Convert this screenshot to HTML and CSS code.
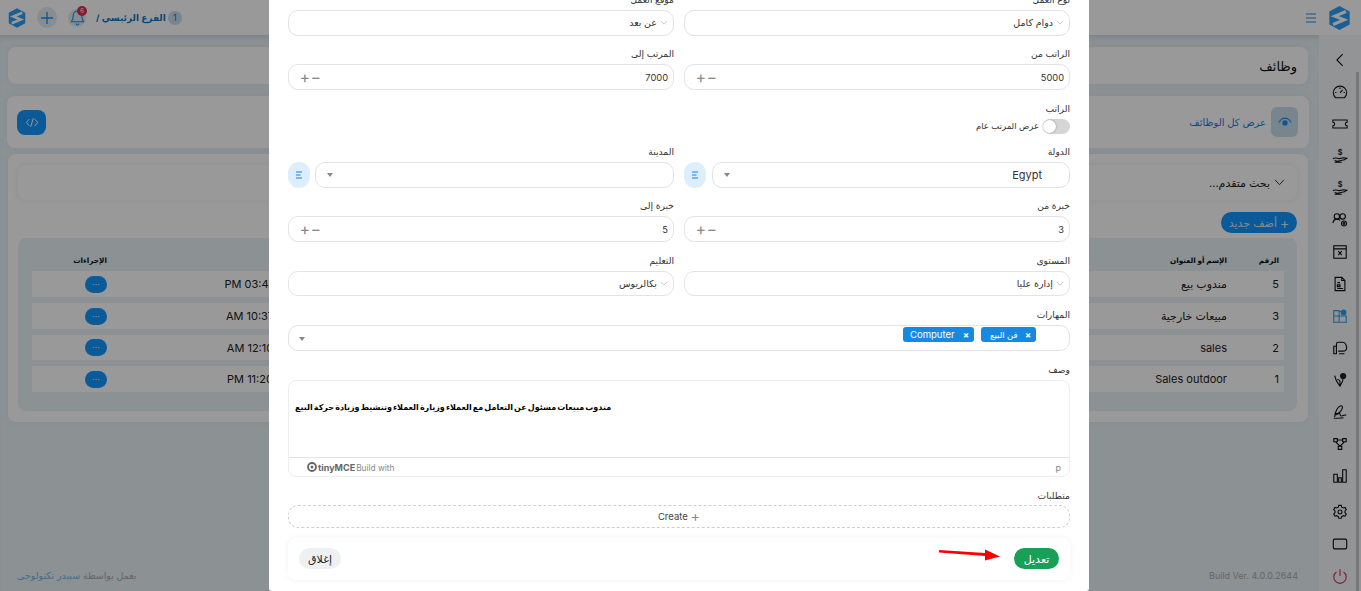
FILE: index.html
```html
<!DOCTYPE html>
<html lang="ar" dir="rtl">
<head>
<meta charset="utf-8">
<title>وظائف</title>
<link rel="stylesheet" href="styles.css">
</head>
<body>
<div class="app">
  <header class="topbar">
    <svg class="logo logo-lg" viewBox="0 0 24 26"><polygon points="12,0 23,6 23,20 12,26 1,20 1,6" fill="#2b9ff5"/><path d="M19 6 L7 11 L17 15 L5 20" fill="none" stroke="#fff" stroke-width="3.4"/></svg>
    <button class="icon-btn burger"><svg viewBox="0 0 12 10" width="12" height="10"><path d="M1 1h10M1 5h10M1 9h10" stroke="#1a8df0" stroke-width="1" fill="none"/></svg></button>
    <div class="top-left">
      <span class="branch-num">1</span>
      <span class="branch">الفرع الرئيسي /</span>
      <span class="bell"><svg viewBox="0 0 16 18" width="15" height="17"><path d="M8 2a4.5 4.5 0 0 0-4.5 4.5c0 4-1.5 6-2 7h13c-.5-1-2-3-2-7A4.5 4.5 0 0 0 8 2zM6.5 15.5a1.5 1.5 0 0 0 3 0" fill="none" stroke="#1a8df0" stroke-width="1.1"/></svg><span class="badge">6</span></span>
      <span class="plus-btn"><svg viewBox="0 0 14 14" width="14" height="14"><path d="M7 1v12M1 7h12" stroke="#1a8df0" stroke-width="1.3" fill="none"/></svg></span>
      <svg class="logo" viewBox="0 0 24 26"><polygon points="12,0 23,6 23,20 12,26 1,20 1,6" fill="#2b9ff5"/><path d="M19 6 L7 11 L17 15 L5 20" fill="none" stroke="#fff" stroke-width="3.4"/></svg>
    </div>
  </header>

  <div class="body-row">
    <nav class="sidebar">
      <svg class="side-ic" viewBox="0 0 18 18"><path d="M12 2.5 5.5 9l6.500 6.500"/></svg>
      <svg class="side-ic" viewBox="0 0 18 18"><path d="M4 15.500a7.500 7.500 0 1 1 10 0zM9 10l3-3.500M3.500 9.500h1.500M13 9.500h1.500M9 4v1.500"/></svg>
      <svg class="side-ic" viewBox="0 0 18 18"><path d="M1 4.500h16V7a2 2 0 0 0 0 4v2.500H1V11a2 2 0 0 0 0-4z"/></svg>
      <svg class="side-ic" viewBox="0 0 18 18"><path d="M1 12c3-2 5 0 7 0l5-1c1.500 0 3 .5 4 .5-2 2-4 2.500-7 2.500l-4 1-3-1M3 16h8"/><text x="9" y="8" class="dollar">$</text></svg>
      <svg class="side-ic" viewBox="0 0 18 18"><path d="M1 12c3-2 5 0 7 0l5-1c1.500 0 3 .5 4 .5-2 2-4 2.500-7 2.500l-4 1-3-1M3 16h8"/><text x="9" y="8" class="dollar">$</text></svg>
      <svg class="side-ic" viewBox="0 0 18 18"><circle cx="5.500" cy="5" r="3"/><circle cx="12" cy="5" r="3"/><path d="M1 12.500c.5-3 2.500-4.500 4.500-4.500s3 .5 3.500 1.500"/><circle cx="13.500" cy="13" r="2.800"/><circle cx="13.500" cy="13" r="1"/></svg>
      <svg class="side-ic" viewBox="0 0 18 18"><rect x="2" y="2" width="14" height="14"/><path d="M2 5.500h14M7 8l4 4.500M11 8l-4 4.500"/></svg>
      <svg class="side-ic" viewBox="0 0 18 18"><path d="M3.500 1.500h7.500l3.500 3.500v11.500h-11zM11 1.500V5h3.500M6 7.500h3M6 14h6.500M6 10h3v2H6z"/></svg>
      <svg class="side-ic side-active" viewBox="0 0 18 18"><path d="M2 3h6v6H2zM2 9h6v7H2zM8 9h8v7H8zM8 4h3"/><circle cx="13" cy="5" r="3.200" class="dot"/></svg>
      <svg class="side-ic" viewBox="0 0 18 18"><path d="M5 7V4.500C5 3 6 2.500 7 2.500h5c2.500 0 4.500 3 4.500 6.500s-2.500 3.500-4.500 3.500H7M2 7h3v8.500H2zM8 15.500h6"/></svg>
      <svg class="side-ic" viewBox="0 0 18 18"><path d="M3 4l2 6 4 6 3-6 .5-3M6 8.500c1.500 0 2.500 1 3 2v5"/><circle cx="12.500" cy="4.500" r="3.500" class="solid"/></svg>
      <svg class="side-ic" viewBox="0 0 18 18"><path d="M3 14.500C3 9 7 2 10.500 2c2 0 1.500 4-1.500 7-2 2-4.500 4-5 2.500-.5-1.500 3.500-1 4.500-.5s.5 3 2.500 2.500 2-1.500 5-1M2 16c4 0 8 0 11-.5"/></svg>
      <svg class="side-ic" viewBox="0 0 18 18"><path d="M2 3h4v3.500H2zM12 3h4v3.500h-4zM7 11.500h4V15H7zM6 4.500h6M4 6.500l5 5M14 6.500l-5 5"/></svg>
      <svg class="side-ic" viewBox="0 0 18 18"><path d="M2 7h4v9H2zM7.500 11h3v5h-3zM12 2h4v14h-4z"/></svg>
      <svg class="side-ic gap-top" viewBox="0 0 18 18"><circle cx="9" cy="9" r="2.200"/><path d="M7.600 1.500h2.800l.5 2 1.800 1 2-.6 1.400 2.400-1.500 1.500v2l1.500 1.500-1.400 2.400-2-.6-1.800 1-.5 2H7.600l-.5-2-1.800-1-2 .6-1.400-2.400 1.500-1.500v-2L1.900 6.300l1.400-2.400 2 .6 1.800-1z"/></svg>
      <svg class="side-ic" viewBox="0 0 18 18"><rect x="1.500" y="3.500" width="15" height="11" rx="1.500"/></svg>
      <svg class="side-ic side-power" viewBox="0 0 18 18"><path d="M9 1.500v7.500M5 4.500a7 7 0 1 0 8 0"/></svg>
    </nav>

    <main class="main">
      <section class="card title-card"><h1 class="page-title">وظائف</h1></section>
      <section class="card view-card">
        <div class="view-link">
          <span class="eye-box"><svg viewBox="0 0 16 12" width="14" height="11"><path d="M1 6c2-3.500 4.500-5 7-5s5 1.500 7 5" fill="none" stroke="#1a8df0" stroke-width="1.4"/><circle cx="8" cy="6.500" r="3" fill="#1a8df0"/></svg></span>
          <span class="view-text">عرض كل الوظائف</span>
        </div>
        <button class="code-btn"><svg viewBox="0 0 16 12" width="14" height="11"><path d="M5 2 1.500 6 5 10M11 2l3.500 4L11 10M9.500 1 6.500 11" fill="none" stroke="#fff" stroke-width="1.1"/></svg></button>
      </section>
      <section class="card list-card">
        <div class="search-bar">
          <svg viewBox="0 0 12 8" width="11" height="7"><path d="M1 1l5 5.500L11 1" fill="none" stroke="#222" stroke-width="1"/></svg>
          <span>بحث متقدم...</span>
        </div>
        <div class="add-row"><button class="add-btn"><span class="add-plus">+</span> أضف جديد</button></div>
        <div class="table-wrap">
          <table class="jobs">
            <thead>
              <tr><th class="c-num">الرقم</th><th class="c-name">الإسم أو العنوان</th><th class="c-fill"></th><th class="c-time"></th><th class="c-gap"></th><th class="c-act">الإجراءات</th></tr>
            </thead>
            <tbody>
              <tr><td class="c-num">5</td><td class="c-name">مندوب بيع</td><td></td><td class="c-time">PM 03:46</td><td></td><td class="c-act"><button class="dots">···</button></td></tr>
              <tr><td class="c-num">3</td><td class="c-name">مبيعات خارجية</td><td></td><td class="c-time">AM 10:37</td><td></td><td class="c-act"><button class="dots">···</button></td></tr>
              <tr class="row-short"><td class="c-num">2</td><td class="c-name">sales</td><td></td><td class="c-time">AM 12:10</td><td></td><td class="c-act"><button class="dots">···</button></td></tr>
              <tr><td class="c-num">1</td><td class="c-name">Sales outdoor</td><td></td><td class="c-time">PM 11:20</td><td></td><td class="c-act"><button class="dots">···</button></td></tr>
            </tbody>
          </table>
        </div>
      </section>
      <footer class="page-foot">
        <span class="build">Build Ver. 4.0.0.2644</span>
        <span class="powered">يعمل بواسطة <span class="powered-link">سبيدر تكنولوجى</span></span>
      </footer>
    </main>
  </div>
</div>

<div class="overlay"></div>

<div class="modal">
  <form class="form">
    <div class="field"><label class="lbl">نوع العمل</label><div class="ctl sel"><svg class="chev" viewBox="0 0 10 6"><path d="M1 1l4 4 4-4"/></svg><span>دوام كامل</span></div></div>
    <div class="field"><label class="lbl">موقع العمل</label><div class="ctl sel"><svg class="chev" viewBox="0 0 10 6"><path d="M1 1l4 4 4-4"/></svg><span>عن بعد</span></div></div>

    <div class="field"><label class="lbl">الراتب من</label><div class="ctl num"><span>5000</span><span class="steps"><span class="st">−</span><span class="st">+</span></span></div></div>
    <div class="field"><label class="lbl">المرتب إلى</label><div class="ctl num"><span>7000</span><span class="steps"><span class="st">−</span><span class="st">+</span></span></div></div>

    <div class="field full"><label class="lbl">الراتب</label>
      <div class="toggle-row"><span class="toggle"><span class="knob"></span></span><span>عرض المرتب عام</span></div>
    </div>

    <div class="field"><label class="lbl">الدولة</label>
      <div class="with-btn wide-gap"><div class="ctl combo"><span class="combo-val">Egypt</span><span class="caret"></span></div><span class="side-btn"><svg viewBox="0 0 8 8" width="8" height="8"><path d="M1 1h6M1 4h4.500M1 7h6" stroke="#0f82e8" stroke-width="1.1" fill="none"/></svg></span></div>
    </div>
    <div class="field"><label class="lbl">المدينة</label>
      <div class="with-btn"><div class="ctl combo"><span class="caret"></span></div><span class="side-btn"><svg viewBox="0 0 8 8" width="8" height="8"><path d="M1 1h6M1 4h4.500M1 7h6" stroke="#0f82e8" stroke-width="1.1" fill="none"/></svg></span></div>
    </div>

    <div class="field"><label class="lbl">خبرة من</label><div class="ctl num"><span>3</span><span class="steps"><span class="st">−</span><span class="st">+</span></span></div></div>
    <div class="field"><label class="lbl">خبرة إلى</label><div class="ctl num"><span>5</span><span class="steps"><span class="st">−</span><span class="st">+</span></span></div></div>

    <div class="field"><label class="lbl">المستوى</label><div class="ctl sel"><svg class="chev" viewBox="0 0 10 6"><path d="M1 1l4 4 4-4"/></svg><span>إدارة عليا</span></div></div>
    <div class="field"><label class="lbl">التعليم</label><div class="ctl sel"><svg class="chev" viewBox="0 0 10 6"><path d="M1 1l4 4 4-4"/></svg><span>بكالريوس</span></div></div>

    <div class="field full"><label class="lbl">المهارات</label>
      <div class="ctl tags">
        <span class="tag"><span class="tag-x">×</span><span class="tag-ar">فن البيع</span></span>
        <span class="tag tag-en"><span class="tag-x">×</span><span>Computer</span></span>
        <span class="caret caret-end"></span>
      </div>
    </div>

    <div class="field full"><label class="lbl">وصف</label>
      <div class="editor">
        <div class="editor-body"><p class="editor-text">مندوب مبيعات مسئول عن التعامل مع العملاء وزيارة العملاء وتنشيط وزيادة حركة البيع</p></div>
        <div class="editor-status">
          <span class="path">p</span>
          <span class="brand"><svg viewBox="0 0 10 10" width="10" height="10"><circle cx="5" cy="5" r="4" fill="none" stroke="#666" stroke-width="1.8"/><circle cx="5" cy="5" r="1.500" fill="#666"/></svg><b class="tiny">tinyMCE</b><span class="with">Build with</span></span>
        </div>
      </div>
    </div>

    <div class="field full"><label class="lbl lbl-tight">متطلبات</label>
      <button type="button" class="create"><span class="create-plus">+</span><span>Create</span></button>
    </div>
  </form>

  <div class="modal-foot">
    <button type="button" class="btn-save">تعديل</button>
    <button type="button" class="btn-close">إغلاق</button>
  </div>

  <svg class="arrow" viewBox="0 0 62 14" width="62" height="14"><polygon points="0,1 46,4 46,0.500 61,7.500 46,11.500 46,7 0,3.500" fill="#f00"/></svg>
</div>
</body>
</html>
```

FILE: styles.css
```css
* { box-sizing: border-box; }
html, body { margin: 0; height: 591px; overflow: hidden; }
body { font-family: "Inter", "DejaVu Sans", sans-serif; font-size: 11px; color: #222; background: #e9f2f7; }
button { font-family: inherit; border: 0; padding: 0; }
h1, p { margin: 0; }

.app { display: flex; flex-direction: column; height: 591px; }
.topbar { height: 35px; background: #fff; display: flex; align-items: center; padding: 0 10px 0 8px; position: relative; }
.logo { width: 18px; height: 20px; }
.logo-lg { width: 23px; height: 24px; }
.icon-btn { background: none; display: flex; margin-right: 11px; }
.top-left { margin-right: auto; display: flex; align-items: center; }
.branch-num { width: 14px; height: 14px; border-radius: 50%; background: #c9deee; color: #1476c4; font-size: 9px; display: flex; align-items: center; justify-content: center; margin-left: 2px; }
.branch { color: #1476c4; font-weight: 700; font-size: 9px; margin-left: 10px; }
.bell { position: relative; width: 18px; height: 18px; display: flex; align-items: center; justify-content: center; margin-left: 11px; border-radius: 50%; background: #e3ecf3; }
.badge { position: absolute; top: -3px; right: -1px; width: 10px; height: 10px; border-radius: 50%; background: #e02d4c; color: #fff; font-size: 6px; line-height: 10px; text-align: center; }
.plus-btn { width: 20px; height: 21px; border-radius: 50%; background: #e3ecf3; display: flex; align-items: center; justify-content: center; margin-left: 11px; }

.body-row { flex: 1; display: flex; min-height: 0; }
.sidebar { width: 42px; flex: none; background: #f3f7fa; padding-top: 9px; display: flex; flex-direction: column; align-items: center; position: relative; }
.sidebar::after { content: ""; position: absolute; right: 2px; top: 37px; bottom: 0; width: 3px; background: #c6c6c6; }
.side-ic { width: 32px; height: 32px; padding: 8px; flex: none; fill: none; stroke: #111; stroke-width: 1.25; }
.gap-top { margin-top: 4px; }
.side-active { stroke: #2b9ff5; }
.side-power { stroke: #e02d4c; }
.dot { fill: #2b9ff5; stroke: none; }
.solid { fill: #222; stroke: none; }
.dollar { font-size: 8px; font-weight: 700; fill: #222; stroke: none; text-anchor: middle; }

.main { flex: 1; min-width: 0; padding: 12px 11px 0 8px; display: flex; flex-direction: column; box-shadow: inset 0 6px 8px -6px rgba(0,0,0,.18); }
.card { background: #fff; border-radius: 8px; box-shadow: 0 0 8px rgba(0,0,0,.05); }
.title-card { height: 37px; display: flex; align-items: center; padding: 0 11px; }
.page-title { font-size: 13px; font-weight: 400; color: #111; }
.view-card { height: 52px; margin: 12px -1px 0; display: flex; align-items: center; justify-content: space-between; padding: 0 11px 0 10px; }
.view-link { display: flex; align-items: center; gap: 5px; }
.eye-box { width: 27px; height: 30px; border-radius: 6px; background: #c9deee; display: flex; align-items: center; justify-content: center; }
.view-text { color: #1a7fd0; font-size: 10px; }
.code-btn { width: 29px; height: 25px; border-radius: 8px; background: #1296ff; display: flex; align-items: center; justify-content: center; }
.list-card { height: 268px; margin-top: 6px; padding: 11px 11px 11px 10px; display: flex; flex-direction: column; }
.search-bar { height: 35px; border-radius: 8px; box-shadow: 0 0 6px rgba(0,0,0,.07); display: flex; align-items: center; gap: 4px; padding: 0 12px; font-size: 11px; flex: none; }
.add-row { display: flex; margin-top: 12px; flex: none; }
.add-btn { width: 76px; height: 21px; border-radius: 11px; background: #1296ff; color: #dbe9f5; font-size: 11px; display: flex; align-items: center; justify-content: center; gap: 3px; }
.add-plus { font-size: 14px; line-height: 1; }
.table-wrap { margin-top: 5px; flex: 1; background: #e9f2f7; border-radius: 8px; padding: 9px 13px 0 14px; }
.jobs { width: 100%; table-layout: fixed; border-collapse: separate; border-spacing: 0 6px; margin-top: -6px; }
.jobs th { font-size: 7.300px; font-weight: 700; color: #111; height: 18px; padding: 9px 0 0; text-align: right; line-height: 9px; }
.jobs td { background: #fff; height: 26px; padding: 0; font-size: 11px; color: #222; text-align: right; }
.jobs .row-short td { height: 25px; }
.c-num { width: 57px; padding-right: 5px !important; }
.c-name { width: 300px; }
.c-time { width: 140px; text-align: center !important; direction: ltr; }
.c-gap { width: 73px; }
.c-act { width: 75px; }
.dots { width: 22px; height: 17px; border-radius: 9px; background: #1296ff; color: #e8f2fa; font-size: 9px; line-height: 17px; display: block; }
.page-foot { margin-top: auto; padding: 0 10px 10px 9px; display: flex; justify-content: space-between; font-size: 9px; color: #aaa; }
.powered { font-size: 9.500px; }
.build { direction: ltr; }
.powered-link { color: #6fb5ea; }

.overlay { position: fixed; inset: 0; background: rgba(0,0,0,.4); }

.modal { position: absolute; left: 269px; top: 0; width: 820px; height: 591px; background: #fff; overflow: hidden; padding: 0 19px; border-radius: 0 0 3px 3px; }
.form { margin-top: -7px; display: grid; grid-template-columns: 386px 386px; column-gap: 10px; row-gap: 11.800px; }
.field { min-width: 0; }
.full { grid-column: 1 / -1; }
.lbl { display: block; height: 14px; line-height: 14px; margin-bottom: 3px; font-size: 9.200px; color: #333; }
.lbl-tight { margin-bottom: 2px; }
.ctl { height: 25.600px; border: 1px solid #e1e3e8; border-radius: 10px; display: flex; align-items: center; font-size: 9.500px; color: #333; background: #fff; }
.sel { padding: 0 5px 0 0; gap: 3px; }
.chev { width: 8px; height: 5px; fill: none; stroke: #bbb; stroke-width: 1; }
.num { padding: 0 5px 0 0; justify-content: space-between; font-size: 9.300px; }
.steps { display: flex; padding-left: 12px; font-size: 16px; color: #8a8a8a; gap: 2px; line-height: 1; }
.st { width: 9px; text-align: center; }
.toggle-row { height: 14.500px; display: flex; align-items: center; gap: 4px; font-size: 8.500px; color: #333; }
.toggle { width: 27px; height: 15px; border-radius: 8px; background: #d6d6d6; display: flex; justify-content: flex-end; padding: 1px 1px 1px 0; flex: none; }
.knob { width: 13px; height: 13px; border-radius: 50%; background: #fff; box-shadow: 0 0 2px rgba(0,0,0,.4); }
.with-btn { display: flex; gap: 5px; }
.wide-gap { gap: 6px; }
.combo { flex: 1; padding: 0 27px 0 11px; justify-content: space-between; }
.combo .caret:only-child { margin-right: auto; }
.combo-val { font-size: 11px; }
.caret { width: 0; height: 0; border-left: 3.500px solid transparent; border-right: 3.500px solid transparent; border-top: 4px solid #888; flex: none; }
.side-btn { width: 22px; height: 25.600px; flex: none; border-radius: 11px; background: #ddeeff; display: flex; align-items: center; justify-content: center; }
.tags { padding: 1px 33px 0 10px; gap: 7px; align-items: flex-start; }
.tag { height: 15px; background: #168ae3; color: #fff; border-radius: 3px; font-size: 9.500px; display: flex; align-items: center; justify-content: space-between; width: 55px; padding: 0 5px 0 9px; gap: 3px; white-space: nowrap; }
.tag-en { width: 71px; padding: 0 5px 0 7px; }
.tag-ar { font-size: 8.500px; }
.tag-x { font-weight: 700; font-size: 9px; }
.caret-end { margin-right: auto; align-self: center; }
.editor { height: 97.500px; border: 1px solid #eceef1; border-radius: 8px; display: flex; flex-direction: column; }
.editor-body { flex: 1; padding: 18px 6px 0; direction: ltr; }
.editor-text { direction: rtl; width: max-content; font-weight: 700; font-size: 8px; word-spacing: -0.8px; color: #000; line-height: 16px; }
.editor-status { height: 19px; border-top: 1px solid #e4e4e4; display: flex; justify-content: space-between; align-items: center; padding: 0 8px 0 18px; color: #888; font-size: 9px; }
.brand { display: flex; align-items: center; direction: ltr; gap: 1px; }
.tiny { font-size: 9px; color: #666; }
.with { font-size: 8.300px; color: #888; padding-top: 2px; }
.create { width: 100%; height: 23px; background: #fff; border: 1px dashed #cfcfcf; border-radius: 10px; display: flex; align-items: center; justify-content: center; gap: 3px; font-size: 9.500px; color: #444; }
.create-plus { font-size: 14px; color: #888; line-height: 1; }
.modal-foot { height: 42px; margin-top: 10px; border-radius: 8px; box-shadow: 0 0 6px rgba(0,0,0,.06); display: flex; align-items: center; justify-content: space-between; padding: 0 11px; }
.btn-save { width: 45px; height: 21px; border-radius: 11px; background: #18a058; color: #fff; font-size: 11px; }
.btn-close { width: 42px; height: 21px; border-radius: 11px; background: #eef1f4; color: #222; font-size: 11px; }
.arrow { position: absolute; left: 670px; top: 549px; }
```
